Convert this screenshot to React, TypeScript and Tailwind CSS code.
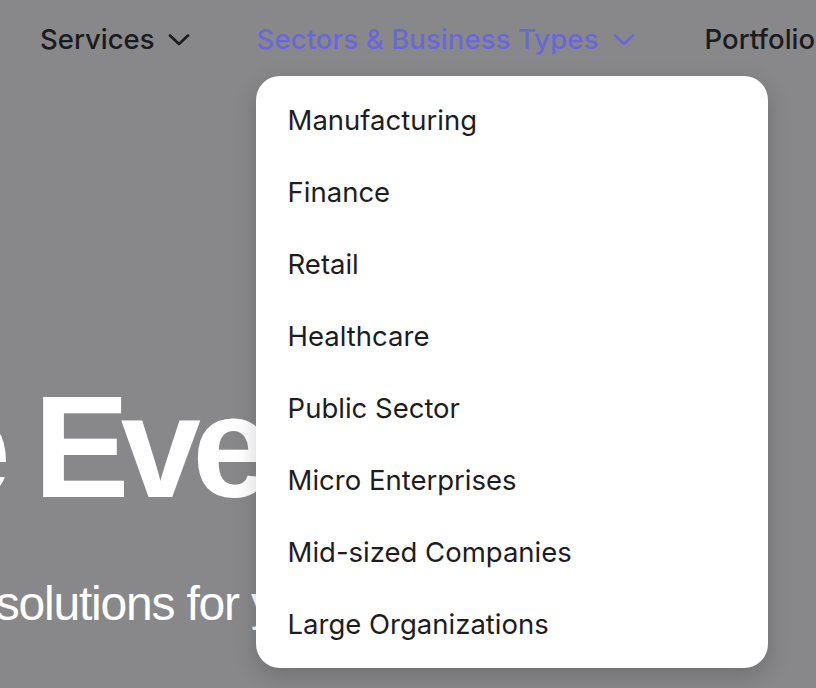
import React from "react";

const Chevron = ({ color }: { color: string }) => (
  <svg width="22" height="12" viewBox="0 0 22 12" fill="none" className="shrink-0">
    <polyline points="2,1.5 11,10 20,1.5" stroke={color} strokeWidth="2.6" strokeLinecap="round" strokeLinejoin="round" />
  </svg>
);

const items = [
  "Manufacturing",
  "Finance",
  "Retail",
  "Healthcare",
  "Public Sector",
  "Micro Enterprises",
  "Mid-sized Companies",
  "Large Organizations",
];

export default function App() {
  return (
    <div className="relative w-[816px] h-[688px] overflow-hidden bg-[#88888a]">
      <nav className="flex h-20 items-center pl-10 whitespace-nowrap font-['Inter',sans-serif] text-[27.5px] font-medium">
        <div className="flex items-center gap-[13px] text-[#1b1b1d]">
          <span>Services</span>
          <Chevron color="#1b1b1d" />
        </div>
        <div className="relative ml-[67px] flex h-20 items-center gap-[14px] text-[#6a67d8]">
          <span className="tracking-[0.1px]">Sectors &amp; Business Types</span>
          <Chevron color="#6a67d8" />
          <div className="absolute left-[-1px] top-[76px] z-10 w-[512px] rounded-[24px] bg-white pt-[9px] pb-[7px] shadow-[0_8px_24px_rgba(0,0,0,0.18)]">
            {items.map((t) => (
              <div key={t} className="flex h-[72px] items-center px-8 text-[27.5px] font-normal text-[#1d1d1f]">
                {t}
              </div>
            ))}
          </div>
        </div>
        <div className="ml-[70px] text-[#1b1b1d]">Portfolio</div>
      </nav>
      <div className="mt-[288px] whitespace-nowrap font-['Liberation_Sans',Arial,sans-serif] text-white">
        <div className="ml-[-188px] text-[144px] font-bold leading-[160px] tracking-[-0.06em]">
          the Everyday
        </div>
        <div className="ml-[-175px] mt-[48px] text-[48px] leading-[56px] tracking-tight">
          Tailored solutions for your business
        </div>
      </div>
    </div>
  );
}
